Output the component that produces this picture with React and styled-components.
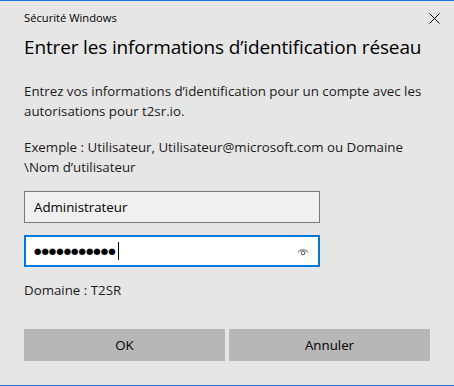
import React from "react";
import styled, { createGlobalStyle } from "styled-components";

const Global = createGlobalStyle`
  html, body { margin: 0; padding: 0; background: #e6e6e6; }
  body { font-family: "Open Sans", "Noto Sans", sans-serif; }
`;

const Dialog = styled.div`
  width: 454px;
  height: 386px;
  box-sizing: border-box;
  background: #e6e6e6;
  border-top: 1px solid #1a77cf;
  border-bottom: 1px solid #1a77cf;
  display: flex;
  flex-direction: column;
  color: #000;
  font-family: "Open Sans", "Noto Sans", sans-serif;
`;

const TitleBar = styled.div`
  height: 32px;
  display: flex;
  align-items: center;
  justify-content: space-between;
  padding: 0 14px 0 24px;
  font-size: 11.2px;
  color: #000;
`;

const Close = styled.svg`
  width: 11px;
  height: 11px;
  margin-top: 2px;
`;

const Body = styled.div`
  flex: 1;
  display: flex;
  flex-direction: column;
  padding: 0 24px;
`;

const Heading = styled.h1`
  margin: 0;
  font-weight: 400;
  font-size: 19px;
  line-height: 28px;
  color: #000;
  letter-spacing: -0.15px;
`;

const Para = styled.p`
  margin: ${(p) => p.$mt || 0}px 0 0;
  font-size: 13.3px;
  line-height: 19.5px;
  color: #1a1a1a;
  max-width: ${(p) => p.$max || "none"};
`;

const Field = styled.div`
  width: 296px;
  height: 32px;
  box-sizing: border-box;
  margin-top: ${(p) => p.$mt}px;
  border: ${(p) => (p.$focused ? "2px solid #0078d7" : "1px solid #7a7a7a")};
  background: ${(p) => (p.$focused ? "#fff" : "#f0f0f0")};
  display: flex;
  align-items: center;
  padding: 0 ${(p) => (p.$focused ? 9 : 10)}px 0 ${(p) => (p.$focused ? 8 : 9)}px;
  font-size: 13.3px;
  color: #000;
`;

const Dots = styled.span`
  font-family: "DejaVu Sans", sans-serif;
  font-size: 8.5px;
  letter-spacing: 0;
  flex: none;
`;

const Caret = styled.span`
  width: 1px;
  height: 18px;
  background: #000;
  margin-left: 2px;
`;

const Spacer = styled.span`
  flex: 1;
`;

const Eye = styled.svg`
  width: 12px;
  height: 9px;
  margin-top: 1px;
`;

const Buttons = styled.div`
  display: grid;
  grid-template-columns: 201px 201px;
  gap: 4px;
  margin-top: auto;
  margin-bottom: 24px;
`;

const Button = styled.button`
  height: 32px;
  border: none;
  background: #b7b7b7;
  font-family: inherit;
  font-size: 13.3px;
  color: #000;
  padding: 0;
`;

export default function App() {
  return (
    <>
      <Global />
      <Dialog>
        <TitleBar>
          <span>Sécurité Windows</span>
          <Close viewBox="0 0 11 11">
            <path d="M0.5 0.5 L10.5 10.5 M10.5 0.5 L0.5 10.5" stroke="#000" strokeWidth="1" fill="none" />
          </Close>
        </TitleBar>
        <Body>
          <Heading>Entrer les informations d’identification réseau</Heading>
          <Para $mt={21}>
            Entrez vos informations d’identification pour un compte avec les autorisations pour t2sr.io.
          </Para>
          <Para $mt={17} $max="400px">
            Exemple : Utilisateur, Utilisateur@microsoft.com ou Domaine \Nom d’utilisateur
          </Para>
          <Field $mt={14}>Administrateur</Field>
          <Field $mt={12} $focused>
            <Dots>●●●●●●●●●●●</Dots>
            <Caret />
            <Spacer />
            <Eye viewBox="0 0 12 9">
              <path d="M1 5.5 C2.5 2 9.5 2 11 5.5" stroke="#555" strokeWidth="1" fill="none" />
              <circle cx="6" cy="6" r="1.8" stroke="#555" strokeWidth="1" fill="none" />
            </Eye>
          </Field>
          <Para $mt={14}>Domaine : T2SR</Para>
          <Buttons>
            <Button>OK</Button>
            <Button>Annuler</Button>
          </Buttons>
        </Body>
      </Dialog>
    </>
  );
}
